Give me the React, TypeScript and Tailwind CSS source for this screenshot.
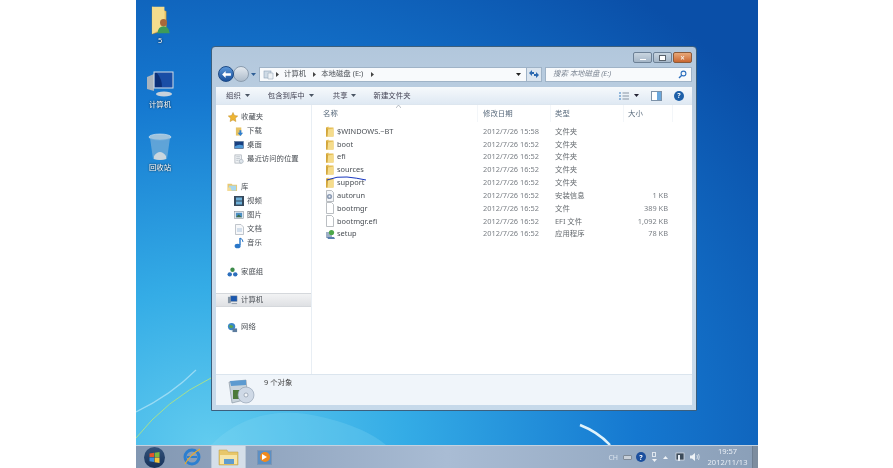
import type { ReactNode } from "react";

const cjk = { fontFamily: '"Noto Sans", "Noto Sans CJK SC", sans-serif' };

function FolderIcon() {
  return (
    <svg width="9" height="11" viewBox="0 0 9 11" className="shrink-0">
      <path d="M1 1.5 L3.5 .5 L3.5 1.5 L8.5 1.5 L8.5 10.5 L1 10.5 Z" fill="#e5bd55" />
      <path d="M3 3.5 L8.5 2.5 L8.5 10.5 L1.5 10.5 Z" fill="#f5dc8c" />
      <path d="M1 1.5 L1 10.5 L2.5 10.5 L3 3 Z" fill="#d2a63c" />
    </svg>
  );
}

function PageIcon() {
  return (
    <svg width="10" height="12" viewBox="0 0 10 12" className="shrink-0">
      <path d="M1.5 .5 H6.5 L8.5 2.5 V11.5 H1.5 Z" fill="#fff" stroke="#a9aeb4" strokeWidth=".8" />
    </svg>
  );
}

function AutorunIcon() {
  return (
    <svg width="10" height="12" viewBox="0 0 10 12" className="shrink-0">
      <path d="M1.5 .5 H6.5 L8.5 2.5 V11.5 H1.5 Z" fill="#f3f5f8" stroke="#a9aeb4" strokeWidth=".8" />
      <circle cx="4.5" cy="6.5" r="2.6" fill="#8d9cb4" />
      <circle cx="4.5" cy="6.5" r="1" fill="#eef2f7" />
    </svg>
  );
}

function SetupIcon() {
  return (
    <svg width="11" height="11" viewBox="0 0 11 11" className="shrink-0">
      <path d="M1 3 L7 3 L7 9 L1 9 Z" fill="#9fb0c6" />
      <path d="M2 8 L9 8 L10 10 L3 10 Z" fill="#5a7fae" />
      <circle cx="6.5" cy="3.5" r="2.6" fill="#4da84a" />
    </svg>
  );
}

function StarIcon() {
  return (
    <svg width="10" height="10" viewBox="0 0 24 24">
      <path d="M12 1 L15.5 8.5 L23.5 9.5 L17.5 15 L19 23 L12 19 L5 23 L6.5 15 L.5 9.5 L8.5 8.5 Z" fill="#eeb534" stroke="#b98318" />
    </svg>
  );
}

function Caret({ color = "#4a5563" }: { color?: string }) {
  return (
    <svg width="5" height="3" viewBox="0 0 5 3" className="shrink-0">
      <path d="M0 0 H5 L2.5 3 Z" fill={color} />
    </svg>
  );
}

function Chevron() {
  return (
    <svg width="3" height="5" viewBox="0 0 3 5" className="shrink-0">
      <path d="M0 0 V5 L3 2.5 Z" fill="#444" />
    </svg>
  );
}

function SideIcon({ kind }: { kind: string }) {
  if (kind === "star") return <StarIcon />;
  if (kind === "download")
    return (
      <svg width="9" height="11" viewBox="0 0 10 11">
        <path d="M1 1 H7 V10 H1 Z" fill="#e6c263" />
        <path d="M5 4 V7 H3 L6 10.5 L9 7 H7 V4 Z" fill="#2f7fd0" />
      </svg>
    );
  if (kind === "desktop")
    return (
      <svg width="10" height="8" viewBox="0 0 11 9">
        <rect x=".5" y=".5" width="10" height="8" fill="#173f80" stroke="#55708f" strokeWidth=".6" />
        <path d="M1 6 Q5 3 10 5 V8 H1 Z" fill="#4f9ad9" />
      </svg>
    );
  if (kind === "recent")
    return (
      <svg width="10" height="10" viewBox="0 0 11 11">
        <rect x="1" y="1" width="7" height="9" fill="#eef1f4" stroke="#9da6ae" strokeWidth=".7" />
        <path d="M2.5 3 H6.5 M2.5 5 H6.5 M2.5 7 H5" stroke="#aab2ba" strokeWidth=".7" />
        <circle cx="8" cy="8" r="2.2" fill="#dfe6ec" stroke="#8c98a3" strokeWidth=".5" />
      </svg>
    );
  if (kind === "library")
    return (
      <svg width="11" height="10" viewBox="0 0 12 11">
        <path d="M.5 2 H5 L6 3 H11 V10 H.5 Z" fill="#e9c870" />
        <path d="M2 4 H10 V9.5 H2 Z" fill="#a9d8ee" />
        <path d="M1 6 L4 6 L5 10 H1 Z" fill="#f3dc96" />
      </svg>
    );
  if (kind === "video")
    return (
      <svg width="10" height="10" viewBox="0 0 10 10">
        <rect width="10" height="10" fill="#36495c" />
        <rect x="2" y="1.5" width="6" height="3" fill="#6fb0d8" />
        <rect x="2" y="5.5" width="6" height="3" fill="#6fb0d8" />
      </svg>
    );
  if (kind === "picture")
    return (
      <svg width="10" height="8" viewBox="0 0 11 9">
        <rect x=".5" y=".5" width="10" height="8" fill="#e9edf1" stroke="#7f8a96" strokeWidth=".6" />
        <rect x="2" y="2" width="7" height="5" fill="#4c8fc4" />
        <path d="M2 7 L5 4 L9 7 Z" fill="#3f6d4a" />
      </svg>
    );
  if (kind === "doc")
    return (
      <svg width="9" height="11" viewBox="0 0 9 11">
        <path d="M.5 .5 H6 L8.5 3 V10.5 H.5 Z" fill="#f7f8fa" stroke="#a7afb8" strokeWidth=".7" />
        <path d="M2 5 H7 M2 7 H7" stroke="#8db0cf" strokeWidth=".7" />
      </svg>
    );
  if (kind === "music")
    return (
      <svg width="10" height="12" viewBox="0 0 10 12">
        <path d="M6 1 V8" stroke="#2a77c8" strokeWidth="1.4" />
        <path d="M6 1 Q9 2 9 5" stroke="#2a77c8" fill="none" />
        <ellipse cx="3.6" cy="9" rx="3" ry="2.3" fill="#2a77c8" />
      </svg>
    );
  if (kind === "homegroup")
    return (
      <svg width="11" height="11" viewBox="0 0 12 12">
        <circle cx="6" cy="3" r="2.4" fill="#3d8b4a" />
        <circle cx="3" cy="8" r="2.4" fill="#2c6fbd" />
        <circle cx="9" cy="8" r="2.4" fill="#2c6fbd" />
      </svg>
    );
  if (kind === "computer")
    return (
      <svg width="11" height="10" viewBox="0 0 12 11">
        <rect x="1" y="2" width="3" height="7" fill="#8795a4" />
        <rect x="4" y="1" width="7" height="6" fill="#1b57ae" stroke="#7b8a99" strokeWidth=".5" />
        <path d="M5 9 H11 V10 H5 Z" fill="#8a97a6" />
      </svg>
    );
  return (
    <svg width="11" height="11" viewBox="0 0 12 12">
      <circle cx="5" cy="5" r="4" fill="#3a87c9" />
      <path d="M2 4 Q5 2 7 5 Q5 8 3 6 Z" fill="#5aa550" />
      <rect x="6" y="7" width="5" height="4" fill="#5c7c9e" />
    </svg>
  );
}

function SideItem({ icon, label, indent, className = "" }: { icon: string; label: string; indent?: boolean; className?: string }) {
  return (
    <div className={`flex h-[14px] items-center ${indent ? "pl-[18px]" : "pl-[11px]"} ${className}`}>
      <span className={`flex justify-center ${indent ? "w-[10px]" : "w-[11px]"}`}>
        <SideIcon kind={icon} />
      </span>
      <span className="ml-[3px] text-[7.4px] leading-none text-[#4a4f55]">{label}</span>
    </div>
  );
}

const files: { name: string; date: string; type: string; size?: string; icon: ReactNode }[] = [
  { name: "$WINDOWS.~BT", date: "2012/7/26 15:58", type: "文件夹", icon: <FolderIcon /> },
  { name: "boot", date: "2012/7/26 16:52", type: "文件夹", icon: <FolderIcon /> },
  { name: "efi", date: "2012/7/26 16:52", type: "文件夹", icon: <FolderIcon /> },
  { name: "sources", date: "2012/7/26 16:52", type: "文件夹", icon: <FolderIcon /> },
  { name: "support", date: "2012/7/26 16:52", type: "文件夹", icon: <FolderIcon /> },
  { name: "autorun", date: "2012/7/26 16:52", type: "安装信息", size: "1 KB", icon: <AutorunIcon /> },
  { name: "bootmgr", date: "2012/7/26 16:52", type: "文件", size: "389 KB", icon: <PageIcon /> },
  { name: "bootmgr.efi", date: "2012/7/26 16:52", type: "EFI 文件", size: "1,092 KB", icon: <PageIcon /> },
  { name: "setup", date: "2012/7/26 16:52", type: "应用程序", size: "78 KB", icon: <SetupIcon /> },
];

function Wallpaper() {
  return (
    <svg viewBox="0 0 622 445" className="absolute inset-0 h-full w-full">
      <path d="M0 438 Q30 400 75 378" stroke="#a6e08e" strokeWidth="1" fill="none" />
      <path d="M0 412 Q35 395 60 370" stroke="#d5f3fb" strokeWidth="1.2" fill="none" opacity=".55" />
      <path d="M75 445 Q120 400 190 418 Q230 428 250 445 Z" fill="#8adcf2" opacity=".25" />
      <path d="M444 425 Q462 432 474 445" stroke="#dff3fb" strokeWidth="2.5" fill="none" />
    </svg>
  );
}

function DesktopIcon({ label, top, gap, children }: { label: string; top: string; gap: string; children: ReactNode }) {
  return (
    <div className={`absolute left-0 flex w-[48px] flex-col items-center ${top}`}>
      {children}
      <span className={`${gap} text-[7.4px] leading-none text-white [text-shadow:0_0_2px_#000]`}>{label}</span>
    </div>
  );
}

function Explorer() {
  return (
    <div className="absolute left-[75px] top-[46px] flex h-[365px] w-[486px] flex-col rounded-t-[4px] border border-[#3c5f7d] bg-gradient-to-b from-[#b2c7dc] via-[#cfdeec] to-[#c6d9ea] px-[4px] pb-[5px]">
      {/* title bar buttons */}
      <div className="flex h-[19px] shrink-0 items-start justify-end gap-[1px] pt-[5px]">
        <div className="flex h-[11px] w-[19px] items-center justify-center rounded-[2px] border border-[#6d8196] bg-gradient-to-b from-[#c9d5e0] to-[#a5b6c7]">
          <span className="mt-[3px] h-[1px] w-[6px] bg-white" />
        </div>
        <div className="flex h-[11px] w-[19px] items-center justify-center rounded-[2px] border border-[#6d8196] bg-gradient-to-b from-[#c9d5e0] to-[#a5b6c7]">
          <span className="h-[6px] w-[7px] border border-[#59626c] bg-white" />
        </div>
        <div className="flex h-[11px] w-[19px] items-center justify-center rounded-[2px] border border-[#8a5a3a] bg-gradient-to-b from-[#e8a878] to-[#c9662f] text-[8px] font-bold leading-none text-[#f5e9dd]">
          ×
        </div>
      </div>

      {/* nav row */}
      <div className="flex h-[16px] shrink-0 items-center">
        <div className="flex w-[43px] shrink-0 items-center pl-[2px]">
          <span className="z-10 flex h-[16px] w-[16px] items-center justify-center rounded-full border border-[#1d4a86] bg-gradient-to-b from-[#5c97d8] to-[#174f9c]">
            <svg width="9" height="7" viewBox="0 0 10 8">
              <path d="M0 4 L4 0 V2.5 H10 V5.5 H4 V8 Z" fill="#fff" />
            </svg>
          </span>
          <span className="ml-[-1px] h-[16px] w-[16px] rounded-full border border-[#8b9cae] bg-gradient-to-b from-[#e3e9ef] to-[#aebccb]" />
          <span className="ml-[2px]">
            <Caret color="#2f5f96" />
          </span>
        </div>
        <div className="flex h-[15px] w-[268px] shrink-0 items-center border border-[#9fb3c7] bg-white/90 pl-[3px] pr-[5px] text-[7.4px] leading-none text-[#4a4f55]">
          <svg width="11" height="11" viewBox="0 0 11 11" className="shrink-0">
            <rect x="1" y="2" width="7" height="7" fill="#cfdbe6" stroke="#8ba0b5" strokeWidth=".6" />
            <path d="M5 4 H10 V10 H5 Z" fill="#eef2f6" stroke="#9aabbc" strokeWidth=".6" />
          </svg>
          <span className="ml-[2px]"><Chevron /></span>
          <span className="ml-[5px]">计算机</span>
          <span className="ml-[7px]"><Chevron /></span>
          <span className="ml-[5px]">本地磁盘 (E:)</span>
          <span className="ml-[8px]"><Chevron /></span>
          <span className="ml-auto"><Caret color="#222" /></span>
        </div>
        <div className="flex h-[15px] w-[15px] shrink-0 items-center justify-center border border-l-0 border-[#9fb3c7] bg-white/50">
          <svg width="10" height="8" viewBox="0 0 10 8">
            <path d="M0 3 L3 0 V2 H5 V4 H3 V6 Z" fill="#2a68b0" />
            <path d="M10 5 L7 8 V6 H5 V4 H7 V2 Z" fill="#2a68b0" />
          </svg>
        </div>
        <div className="ml-[3px] flex h-[15px] w-[147px] shrink-0 items-center justify-between border border-[#9fb3c7] bg-white/90 px-[4px] text-[7.4px] italic leading-none text-[#7d8794]">
          <span className="ml-[3px]">搜索 本地磁盘 (E:)</span>
          <svg width="9" height="9" viewBox="0 0 9 9">
            <circle cx="5.5" cy="3.5" r="2.4" stroke="#2c6fbd" strokeWidth="1.1" fill="none" />
            <path d="M3.8 5.2 L1 8" stroke="#2c6fbd" strokeWidth="1.4" />
          </svg>
        </div>
      </div>

      {/* window body */}
      <div className="mt-[5px] flex min-h-0 flex-1 flex-col bg-white">
        <div className="flex h-[18px] shrink-0 items-center border-b border-[#dde6ef] bg-gradient-to-b from-[#f6f9fc] to-[#dfe9f3] pl-[10px] text-[7.4px] leading-none text-[#445]">
          <span>组织</span>
          <span className="ml-[4px]"><Caret /></span>
          <span className="ml-[18px]">包含到库中</span>
          <span className="ml-[4px]"><Caret /></span>
          <span className="ml-[19px]">共享</span>
          <span className="ml-[3px]"><Caret /></span>
          <span className="ml-[18px]">新建文件夹</span>
          <span className="ml-auto flex items-center">
            <svg width="10" height="8" viewBox="0 0 10 8">
              <path d="M0 1 H2 M0 4 H2 M0 7 H2" stroke="#3b7fc0" strokeWidth="1.2" />
              <path d="M3.5 1 H10 M3.5 4 H10 M3.5 7 H10" stroke="#8794a3" />
            </svg>
            <span className="ml-[5px]"><Caret color="#223" /></span>
            <span className="ml-[12px] flex h-[10px] w-[11px] justify-end border border-[#7d92a8] bg-white">
              <span className="w-[4px] bg-[#6aa7dc]" />
            </span>
            <span className="ml-[12px] mr-[8px] flex h-[10px] w-[10px] items-center justify-center rounded-full bg-[#1d5fa8] text-[7px] font-bold text-white">?</span>
          </span>
        </div>

        <div className="flex min-h-0 flex-1">
          {/* navigation pane */}
          <div className="w-[96px] shrink-0 border-r border-[#e8eef4] pt-[5px]">
            <SideItem icon="star" label="收藏夹" />
            <SideItem icon="download" label="下载" indent />
            <SideItem icon="desktop" label="桌面" indent />
            <SideItem icon="recent" label="最近访问的位置" indent />
            <SideItem icon="library" label="库" className="mt-[14px]" />
            <SideItem icon="video" label="视频" indent />
            <SideItem icon="picture" label="图片" indent />
            <SideItem icon="doc" label="文档" indent />
            <SideItem icon="music" label="音乐" indent />
            <SideItem icon="homegroup" label="家庭组" className="mt-[15px]" />
            <div className="mt-[14px] border-y border-[#d5d8dc] bg-gradient-to-b from-[#f2f3f4] to-[#dfe1e4]">
              <SideItem icon="computer" label="计算机" className="!h-[12px]" />
            </div>
            <SideItem icon="network" label="网络" className="mt-[13px]" />
          </div>

          {/* file list */}
          <div className="relative min-w-0 flex-1 pl-[12px]">
            <svg width="5" height="3" viewBox="0 0 5 3" className="absolute left-[84px] top-0">
              <path d="M0 3 L2.5 0 L5 3" stroke="#9aa4ae" strokeWidth=".7" fill="none" />
            </svg>
            <div className="ml-[-1px] flex h-[17px] items-stretch text-[7.4px] leading-none text-[#5a6b7d]">
              <span className="flex w-[155px] shrink-0 items-center border-r border-[#f3f6f9]">名称</span>
              <span className="flex w-[73px] shrink-0 items-center border-r border-[#f3f6f9] pl-[5px]">修改日期</span>
              <span className="flex w-[73px] shrink-0 items-center border-r border-[#f3f6f9] pl-[4px]">类型</span>
              <span className="flex w-[49px] shrink-0 items-center border-r border-[#f3f6f9] pl-[4px]">大小</span>
            </div>
            <div className="relative mt-[3px]">
              {files.map((f) => (
                <div key={f.name} className="flex h-[12.85px] items-center text-[7.4px] leading-none text-[#5b5f64]">
                  <span className="flex w-[159px] shrink-0 items-center">
                    <span className="flex w-[13px] shrink-0 justify-start pl-[1px]">{f.icon}</span>
                    <span className="text-[#4a4f55]">{f.name}</span>
                  </span>
                  <span className="w-[72px] shrink-0 text-[#7a7f85]">{f.date}</span>
                  <span className="w-[53px] shrink-0 text-[#666b70]">{f.type}</span>
                  <span className="w-[60px] shrink-0 text-right text-[#7a7f85]">{f.size}</span>
                </div>
              ))}
              <svg width="40" height="5" viewBox="0 0 40 5" className="absolute left-[3px] top-[51px]">
                <path d="M0 4 Q10 0 20 1 T39 4" stroke="#1736c0" strokeWidth="1" fill="none" />
              </svg>
            </div>
          </div>
        </div>

        {/* status bar */}
        <div className="flex h-[31px] shrink-0 border-t border-[#dbe5ee] bg-[#f0f5fa] pl-[11px]">
          <svg width="28" height="28" viewBox="0 0 28 28" className="mt-[2px] shrink-0">
            <path d="M2 5 L19 3 L21 22 L5 26 Z" fill="#c9d4dc" stroke="#7f8d9a" strokeWidth=".6" />
            <path d="M3 4 L19 3 L19 8 L4 9 Z" fill="#5c9ad0" />
            <rect x="6" y="13" width="6" height="9" fill="#4c7a3a" />
            <circle cx="19" cy="18" r="8" fill="#cfd9e6" stroke="#8c9bac" strokeWidth=".6" />
            <circle cx="19" cy="18" r="2" fill="#f2f5f8" stroke="#7d8c9c" strokeWidth=".6" />
          </svg>
          <span className="ml-[9px] mt-[4px] text-[7.4px] leading-none text-[#444]">9 个对象</span>
        </div>
      </div>
    </div>
  );
}

function Taskbar() {
  return (
    <div className="flex h-[23px] shrink-0 items-center border-t border-[#c4d2e0] bg-gradient-to-r from-[#8297b2] via-[#a9bcd4] to-[#8a9fb8]">
      <div className="flex w-[36px] shrink-0 justify-center">
        <span className="flex h-[21px] w-[21px] items-center justify-center rounded-full bg-gradient-to-b from-[#33527a] to-[#16325a]">
          <svg width="11" height="11" viewBox="0 0 11 11">
            <path d="M.5 1.5 L5 .8 V5 H.5 Z" fill="#e2552c" />
            <path d="M5.6 .7 L10.5 0 V5 H5.6 Z" fill="#7db93f" />
            <path d="M.5 5.6 H5 V10 L.5 9.3 Z" fill="#3a8fdc" />
            <path d="M5.6 5.6 H10.5 V11 L5.6 10.2 Z" fill="#f3c53a" />
          </svg>
        </span>
      </div>
      <div className="flex w-[39px] shrink-0 justify-center">
        <svg width="20" height="20" viewBox="0 0 20 20">
          <circle cx="10" cy="10" r="7" fill="none" stroke="#2c7fd0" strokeWidth="3" />
          <path d="M5 10 H15" stroke="#2c7fd0" strokeWidth="2" />
          <path d="M3 17 Q8 8 18 2" stroke="#e8a92a" strokeWidth="1.2" fill="none" />
        </svg>
      </div>
      <div className="flex h-full w-[35px] shrink-0 items-center justify-center border-x border-[#b9c7d6] bg-[#d5dfe9]">
        <svg width="21" height="18" viewBox="0 0 21 18">
          <path d="M1 2 H9 L10 4 H20 V17 H1 Z" fill="#e8c76a" stroke="#b99a46" strokeWidth=".5" />
          <path d="M2 7 H19 V16 H2 Z" fill="#f6e5a8" />
          <rect x="6" y="11" width="10" height="5" fill="#5e9cd0" />
        </svg>
      </div>
      <div className="flex w-[37px] shrink-0 justify-center">
        <span className="flex h-[15px] w-[15px] items-center justify-center border border-[#7d96b4] bg-[#5b8fc4]">
          <span className="flex h-[10px] w-[10px] items-center justify-center rounded-full bg-[#f08a1d]">
            <svg width="5" height="6" viewBox="0 0 5 6"><path d="M0 0 L5 3 L0 6 Z" fill="#fff" /></svg>
          </span>
        </span>
      </div>

      <div className="ml-auto flex items-center pr-[4px] text-[7px] leading-none text-[#e8eef5]">
        <span className="text-[#dbe4ee]">CH</span>
        <span className="ml-[5px] h-[5px] w-[9px] rounded-[1px] border border-[#7f8b98] bg-[#c9d0d8]" />
        <span className="ml-[4px] flex h-[10px] w-[10px] items-center justify-center rounded-full bg-[#1c4f9e] text-[7px] font-bold text-white">?</span>
        <span className="ml-[6px] flex h-[10px] w-[4px] flex-col items-center gap-[2px]">
          <span className="h-[5px] w-[4px] border border-[#dfe6ee]" />
          <Caret color="#eef2f6" />
        </span>
        <span className="ml-[7px]"><svg width="5" height="3" viewBox="0 0 5 3"><path d="M0 3 L2.5 0 L5 3 Z" fill="#eef2f6" /></svg></span>
        <svg width="10" height="10" viewBox="0 0 10 10" className="ml-[7px]">
          <rect x="1" y="1" width="8" height="7" fill="#3c4b5a" stroke="#dfe6ee" strokeWidth=".7" />
          <rect x="3" y="3" width="2" height="6" fill="#e8eef5" />
        </svg>
        <svg width="10" height="10" viewBox="0 0 10 10" className="ml-[5px]">
          <path d="M0 3.5 H2 L5 1 V9 L2 6.5 H0 Z" fill="#eef2f6" />
          <path d="M7 3 Q8 5 7 7 M8.5 2 Q10 5 8.5 8" stroke="#eef2f6" strokeWidth=".7" fill="none" />
        </svg>
        <div className="ml-[7px] flex w-[41px] flex-col items-center gap-[3px] text-[7.5px]">
          <span>19:57</span>
          <span>2012/11/13</span>
        </div>
      </div>
      <div className="h-full w-[6px] shrink-0 border-l border-[#6e7f92] bg-[#7d8d9f]" />
    </div>
  );
}

export default function App() {
  return (
    <div className="flex h-[468px] w-[893px] justify-center overflow-hidden bg-white blur-[0.4px]" style={cjk}>
      <div className="ml-[1px] flex h-full w-[622px] flex-col">
        <div className="relative min-h-0 flex-1 bg-[radial-gradient(ellipse_at_12%_100%,#62ccef_0%,#34ace6_25%,#1578d0_55%,#0a4fa8_90%)]">
          <Wallpaper />
          <DesktopIcon label="5" top="top-[5px]" gap="mt-[2px]">
            <svg width="24" height="30" viewBox="0 0 26 34">
              <path d="M4 2 L20 7 V28 L4 33 Z" fill="#eec96a" stroke="#b58a2c" strokeWidth=".5" />
              <path d="M4 2 L18 2 L18 24 L4 33 Z" fill="#f4dc8d" />
              <circle cx="17" cy="20" r="4" fill="#a8683a" />
              <path d="M10 32 Q11 24 17 24 Q23 24 24 32 Z" fill="#3d9b5a" />
            </svg>
          </DesktopIcon>
          <DesktopIcon label="计算机" top="top-[71px]" gap="mt-[3px]">
            <svg width="28" height="27" viewBox="0 0 28 27">
              <path d="M1 6 L8 3 V20 L1 18 Z" fill="#aab4be" />
              <rect x="8" y="1" width="19" height="16" fill="#1a4ea6" stroke="#d5dde5" />
              <path d="M11 2 Q16 8 16 16 H9 V2 Z" fill="#0b2f78" />
              <ellipse cx="18" cy="23" rx="8" ry="2.5" fill="#c8d2dc" />
            </svg>
          </DesktopIcon>
          <DesktopIcon label="回收站" top="top-[133px]" gap="mt-[3px]">
            <svg width="24" height="28" viewBox="0 0 24 28">
              <ellipse cx="12" cy="4" rx="11" ry="3" fill="#9fc3dc" stroke="#dfeaf2" strokeWidth=".6" />
              <path d="M2 5 L5 26 Q12 28 19 26 L22 5 Q12 8 2 5 Z" fill="#6ba9d8" opacity=".85" />
              <path d="M6 23 Q12 15 18 23 L18 26 Q12 28 6 26 Z" fill="#c9d6de" />
            </svg>
          </DesktopIcon>
          <Explorer />
        </div>
        <Taskbar />
      </div>
    </div>
  );
}
